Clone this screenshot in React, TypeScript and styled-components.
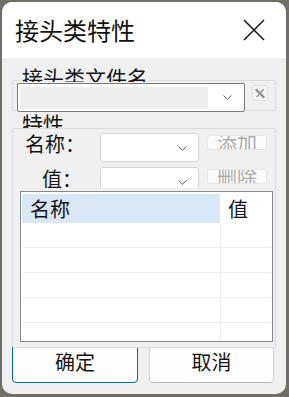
import React from 'react';
import styled, { createGlobalStyle } from 'styled-components';

const Global = createGlobalStyle`
  html, body { margin: 0; padding: 0; background: #6f6f68; }
  body {
    width: 289px; height: 397px; overflow: hidden;
    font-family: "Noto Sans CJK SC", "Noto Sans", sans-serif;
    color: #141414;
  }
`;

const Page = styled.div`
  padding: 2px 3px 3px 2px;
`;

const Window = styled.div`
  width: 284px;
  height: 392px;
  border-radius: 10px;
  overflow: hidden;
  background: #f0f0f0;
  display: flex;
  flex-direction: column;
`;

const TitleBar = styled.div`
  height: 56px;
  flex: none;
  background: #ffffff;
  display: flex;
  align-items: center;
  justify-content: space-between;
  padding: 0 21px 0 13px;
`;

const Title = styled.div`
  font-size: 24px;
  line-height: 24px;
  color: #111;
`;

const Body = styled.div`
  padding: 22px 0 0 10px;
  display: flex;
  flex-direction: column;
`;

const GroupBox = styled.div<{ $h: number; $mt?: number; $raised?: boolean }>`
  position: relative;
  box-sizing: border-box;
  width: 264px;
  height: ${p => p.$h}px;
  margin-top: ${p => p.$mt ?? 0}px;
  border: 1px solid #dcdcdc;
  border-radius: 2px;
  background: #f0f0f0;
  z-index: ${p => (p.$raised ? 1 : 'auto')};
`;

const GroupLabel = styled.div<{ $top: number }>`
  position: absolute;
  left: 8px;
  top: ${p => p.$top}px;
  height: 15px;
  overflow: hidden;
  padding: 0 1px;
  background: #f0f0f0;
  font-size: 21px;
  line-height: 21px;
  white-space: nowrap;
  color: #151515;
`;

const FileRow = styled.div`
  position: relative;
  display: flex;
  align-items: flex-start;
  margin: 2px 0 0 4px;
`;

const EditCombo = styled.div`
  box-sizing: border-box;
  width: 228px;
  height: 29px;
  border: 1px solid #7a7a7a;
  border-radius: 2px;
  background: #fff;
  display: flex;
  align-items: center;
  padding: 2px;
`;

const EditArea = styled.div`
  width: 188px;
  height: 22px;
  background: #eeeeee;
`;

const ChevronSlot = styled.div`
  flex: 1;
  display: flex;
  align-items: center;
  justify-content: center;
  padding-left: 4px;
`;

const PinButton = styled.div`
  box-sizing: border-box;
  width: 16px;
  height: 16px;
  margin: 2px 0 0 7px;
  background: #f4f4f4;
  border: 1px solid #e2e2e2;
  border-radius: 3px;
  display: flex;
  align-items: center;
  justify-content: center;
`;

const GroupContent = styled.div`
  padding-top: 4px;
  display: flex;
  flex-direction: column;
`;

const FieldRow = styled.div<{ $h: number; $mt?: number }>`
  display: flex;
  align-items: flex-start;
  height: ${p => p.$h}px;
  margin-top: ${p => p.$mt ?? 0}px;
  overflow: hidden;
`;

const FieldLabel = styled.div<{ $indent: number; $mt: number }>`
  box-sizing: border-box;
  width: 87px;
  padding-left: ${p => p.$indent}px;
  margin-top: ${p => p.$mt}px;
  font-size: 20px;
  line-height: 20px;
  white-space: nowrap;
  color: #151515;
`;

const Combo = styled.div`
  box-sizing: border-box;
  width: 99px;
  height: 29px;
  border: 1px solid #d6d6d6;
  border-radius: 3px;
  background: #fff;
  display: flex;
  align-items: center;
  justify-content: flex-end;
  padding: 2px 11px 0 0;
`;

const SmallButton = styled.div`
  box-sizing: border-box;
  width: 60px;
  height: 15px;
  margin: 2px 0 0 8px;
  border: 1px solid #e6e6e6;
  border-radius: 3px;
  background: #fafafa;
  color: #acacac;
  font-size: 20px;
  line-height: 15px;
  display: flex;
  align-items: center;
  justify-content: center;
  overflow: hidden;
  white-space: nowrap;
`;

const ListView = styled.div`
  box-sizing: border-box;
  width: 253px;
  height: 151px;
  margin: 3px 0 0 7px;
  border: 1px solid #888888;
  background: #ffffff;
  padding: 2px 1px 0 1px;
  overflow: hidden;
`;

const HeaderRow = styled.div`
  display: flex;
  height: 29px;
`;

const HeaderCell = styled.div<{ $w?: number; $active?: boolean; $pl: number }>`
  box-sizing: border-box;
  ${p => (p.$w ? `width: ${p.$w}px; flex: none;` : 'flex: 1;')}
  margin-right: ${p => (p.$w ? 1 : 0)}px;
  padding-left: ${p => p.$pl}px;
  background: ${p => (p.$active ? '#d9e8f7' : '#ffffff')};
  font-size: 20px;
  line-height: 29px;
  color: #151515;
`;

const DataRow = styled.div`
  display: flex;
  box-sizing: border-box;
  height: 25px;
  border-bottom: 1px solid #ececec;
`;

const DataCell = styled.div<{ $w?: number }>`
  box-sizing: border-box;
  ${p => (p.$w ? `width: ${p.$w}px; flex: none; border-right: 1px solid #ececec;` : 'flex: 1;')}
`;

const Footer = styled.div`
  display: flex;
  gap: 11px;
  margin-top: -8px;
`;

const DialogButton = styled.div<{ $primary?: boolean; $w: number }>`
  box-sizing: border-box;
  width: ${p => p.$w}px;
  height: 43px;
  border: 1px solid ${p => (p.$primary ? '#0067c0' : '#d3d3d3')};
  border-bottom-color: ${p => (p.$primary ? '#0067c0' : '#bdbdbd')};
  border-radius: 4px;
  background: #fdfdfd;
  display: flex;
  align-items: center;
  justify-content: center;
  padding-top: 1px;
  font-size: 20px;
  line-height: 20px;
  color: #151515;
`;

const Chevron = () => (
  <svg width="9" height="5" viewBox="0 0 9 5">
    <path d="M0.5 0.5 L4.5 4.3 L8.5 0.5" fill="none" stroke="#5a5a5a" strokeWidth="1" />
  </svg>
);

const CloseIcon = () => (
  <svg width="22" height="22" viewBox="0 0 22 22">
    <path d="M1 1 L21 21 M21 1 L1 21" stroke="#1c1c1c" strokeWidth="1.6" fill="none" />
  </svg>
);

const PinIcon = () => (
  <svg width="12" height="11" viewBox="0 0 12 11">
    <path d="M2.5 2 L9.5 9" stroke="#8c8c8c" strokeWidth="2.4" strokeLinecap="round" />
    <path d="M9.5 1.5 L3 8.5" stroke="#9a9a9a" strokeWidth="1.6" strokeLinecap="round" />
  </svg>
);

const rows = [0, 1, 2, 3, 4];

export default function App() {
  return (
    <Page>
      <Global />
      <Window>
        <TitleBar>
          <Title>接头类特性</Title>
          <CloseIcon />
        </TitleBar>
        <Body>
          <GroupBox $h={31}>
            <GroupLabel $top={-14}>接头类文件名</GroupLabel>
            <FileRow>
              <EditCombo>
                <EditArea />
                <ChevronSlot>
                  <Chevron />
                </ChevronSlot>
              </EditCombo>
              <PinButton>
                <PinIcon />
              </PinButton>
            </FileRow>
          </GroupBox>

          <GroupBox $h={220} $mt={17} $raised>
            <GroupLabel $top={-16}>特性</GroupLabel>
            <GroupContent>
              <FieldRow $h={29}>
                <FieldLabel $indent={12} $mt={1}>名称：</FieldLabel>
                <Combo>
                  <Chevron />
                </Combo>
                <SmallButton>添加</SmallButton>
              </FieldRow>
              <FieldRow $h={21} $mt={5}>
                <FieldLabel $indent={29} $mt={2}>值：</FieldLabel>
                <Combo>
                  <Chevron />
                </Combo>
                <SmallButton>删除</SmallButton>
              </FieldRow>
              <ListView>
                <HeaderRow>
                  <HeaderCell $w={198} $pl={8} $active>名称</HeaderCell>
                  <HeaderCell $pl={7}>值</HeaderCell>
                </HeaderRow>
                {rows.map(r => (
                  <DataRow key={r}>
                    <DataCell $w={199} />
                    <DataCell />
                  </DataRow>
                ))}
              </ListView>
            </GroupContent>
          </GroupBox>

          <Footer>
            <DialogButton $primary $w={126}>确定</DialogButton>
            <DialogButton $w={125}>取消</DialogButton>
          </Footer>
        </Body>
      </Window>
    </Page>
  );
}
